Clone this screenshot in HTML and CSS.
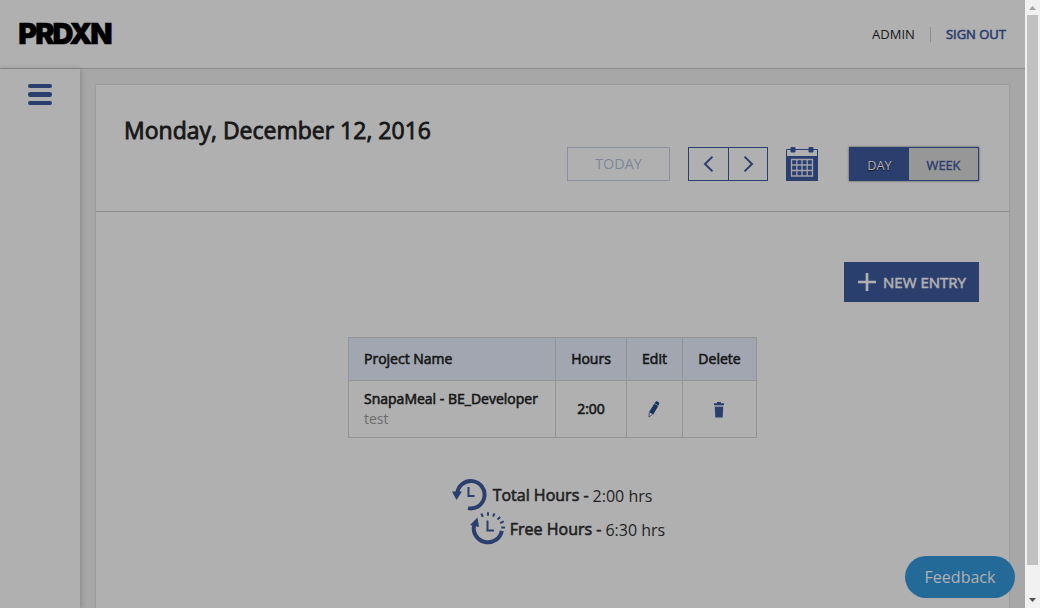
FILE: index.html
```html
<!DOCTYPE html>
<html lang="en">
<head>
<meta charset="utf-8">
<title>PRDXN Timesheet</title>
<link rel="stylesheet" href="styles.css">
</head>
<body>
<div class="window">
  <div class="page">
    <header class="topbar">
      <svg class="logo" width="96" height="24" viewBox="0 0 96 24"><text x="1.200" y="22.300" textLength="94.500" lengthAdjust="spacing">PRDXN</text></svg>
      <nav class="account">
        <span class="admin">ADMIN</span>
        <a class="signout strong">SIGN OUT</a>
      </nav>
    </header>
    <div class="body">
      <aside class="sidebar"><div class="burger"><i></i><i></i><i></i></div></aside>
      <main class="card">
        <div class="card-head">
          <h1 class="strong">Monday, December 12, 2016</h1>
          <div class="controls">
            <div class="today">TODAY</div>
            <div class="arrows">
              <span><svg width="10" height="16" viewBox="0 0 10 16"><path d="M9.500 .6L2 8l7.500 7.400"/></svg></span>
              <span><svg width="10" height="16" viewBox="0 0 10 16"><path d="M1.500 .6L9 8l-7.500 7.400"/></svg></span>
            </div>
            <svg class="calendar" width="32" height="34" viewBox="0 0 32 34">
              <path class="line" d="M.5 10V2.500h31V10"/>
              <rect class="fill" y="9" width="32" height="25"/>
              <rect class="fill" x="4.500" width="5" height="5.500" rx="1"/>
              <rect class="fill" x="22.500" width="5" height="5.500" rx="1"/>
              <path class="grid" d="M5.500 12.500h21v16.500h-21zM10.800 12.500v16.500M16 12.500v16.500M21.200 12.500v16.500M5.500 18h21M5.500 23.500h21"/>
            </svg>
            <div class="switch"><span class="day">DAY</span><span class="week strong">WEEK</span></div>
          </div>
        </div>
        <div class="new-entry strong">
          <svg width="18" height="18" viewBox="0 0 18 18"><path d="M9 0v18M0 9h18"/></svg>
          <span>NEW ENTRY</span>
        </div>
        <table class="entries">
          <tr class="strong"><th class="name">Project Name</th><th class="hours">Hours</th><th class="edit">Edit</th><th class="delete">Delete</th></tr>
          <tr>
            <td class="name"><div class="strong">SnapaMeal - BE_Developer</div><div class="note">test</div></td>
            <td class="strong">2:00</td>
            <td><svg class="pencil" width="12" height="17" viewBox="0 0 12 17"><path d="M7.200 1.200Q8.200 0 9.600.4q2 .8 1.600 2.600l-.7 1.400-4-2.200zM6.200 2.800L10.200 5 5.300 13.600 1 11.200z"/><path class="tip" d="M1.200 11.500L.9 16l3.700-2.600"/></svg></td>
            <td><svg class="bin" width="10" height="16" viewBox="0 0 10 16"><path class="fill" d="M0 1.200h3V0h4v1.200h3v1.800H0zM.8 5h8.400l-.5 10.500H1.300z"/><path class="rim" d="M.5 3h9v2h-9z"/></svg></td>
          </tr>
        </table>
        <div class="totals">
          <div class="total">
            <svg width="36" height="34" viewBox="0 0 36 34"><path class="ring" d="M4.200 15.500A13.700 13.700 0 1 1 15 30.100"/><path class="fill" d="M-1 13.500h10L3.500 22z"/><path class="hands" d="M15.500 9v9h6"/></svg>
            <span class="label strong">Total Hours -</span><span class="value">2:00 hrs</span>
          </div>
          <div class="total">
            <svg width="36" height="34" viewBox="0 0 36 34"><path class="ring" d="M4 13.500A13.900 13.900 0 1 0 31.800 18.800"/><path class="fill" d="M0 13l7.500-7.500 1.500 9.500z"/><path class="hands" d="M17.500 8.500v10H24"/><path class="ticks" d="M12.800 4.800L11.300 1.500M18 3.800V.2M23 4.700l1.500-3.200M27.500 7.500l2.700-2.500M30.200 11.200l3.500-1.800M31.200 15.400h3.800"/></svg>
            <span class="label strong">Free Hours -</span><span class="value">6:30 hrs</span>
          </div>
        </div>
      </main>
    </div>
    <div class="feedback">Feedback</div>
  </div>
  <div class="scrollbar">
    <svg width="7" height="4" viewBox="0 0 7 4"><path fill="#a3a3a3" d="M0 4h7L3.500 0z"/></svg>
    <div class="thumb"></div>
    <svg width="7" height="4" viewBox="0 0 7 4"><path fill="#505050" d="M0 0h7L3.500 4z"/></svg>
  </div>
</div>
</body>
</html>
```

FILE: styles.css
```css
* { box-sizing: border-box; }
body { margin: 0; font-family: "Open Sans", "Noto Sans", sans-serif; color: #171717; }
.window { display: flex; width: 1040px; height: 608px; overflow: hidden; }
.page { position: relative; display: flex; flex-direction: column; width: 1025px; height: 608px; background: #a7a7a7; overflow: hidden; }
.strong { font-weight: 400; -webkit-text-stroke: .6px currentColor; }
.fill { fill: #2b3f6f; }
svg { overflow: visible; }

.topbar { display: flex; flex: none; justify-content: space-between; align-items: center; height: 69px; padding: 0 19px 0 17px; background: #b0b0b0; border-bottom: 1px solid #8c8c8c; }
.logo text { font: 900 29px Inter, sans-serif; fill: #000; stroke: #000; stroke-width: .5; }
.account { display: flex; align-items: center; font-size: 13px; line-height: 15px; }
.admin { padding-right: 15px; border-right: 1px solid #8c8c8c; }
.signout { padding-left: 15px; color: #2b3f6f; }

.body { display: flex; flex: 1; min-height: 0; }
.sidebar { width: 80px; padding: 15px 28px; background: #b0b0b0; box-shadow: 1px 0 5px rgba(0,0,0,.2); }
.burger { display: flex; flex-direction: column; gap: 4px; }
.burger i { height: 4.400px; border-radius: 2.200px; background: #2b3f6f; }
.card { width: 913px; height: 620px; margin: 16px 0 0 16px; background: #b0b0b0; box-shadow: 0 0 2px rgba(0,0,0,.2); display: flex; flex-direction: column; }
.card-head { display: flex; flex: none; justify-content: space-between; height: 127px; padding: 0 30px 0 28px; border-bottom: 1px solid #8c8c8c; }
h1 { margin: 30px 0 0; font-size: 23px; line-height: 31px; white-space: nowrap; }
h1.strong { -webkit-text-stroke-width: .85px; }
.controls { display: flex; align-items: flex-start; padding-top: 62px; }
.today { width: 103px; height: 34px; border: 1px solid #8a90a2; color: #7e869b; font-size: 14.400px; line-height: 32px; text-align: center; }
.arrows { display: flex; width: 80px; height: 34px; margin-left: 18px; border: 1px solid #2b3f6f; }
.arrows span { display: flex; flex: 1; align-items: center; justify-content: center; }
.arrows span + span { border-left: 1px solid #2b3f6f; }
.arrows path { fill: none; stroke: #2b3f6f; stroke-width: 2; }
.calendar { margin-left: 18px; }
.line { fill: none; stroke: #2b3f6f; }
.grid { fill: none; stroke: #a0a3ac; stroke-width: 1.300; }
.switch { display: flex; width: 130px; height: 34px; margin-left: 31px; border: 1px solid #2b3f6f; box-shadow: 0 0 2px rgba(0,0,0,.6); font-size: 12.800px; line-height: 34px; text-align: center; }
.day { width: 59px; background: #2b3f6f; color: #b0b0b0; text-shadow: 0 1px 1px #111; }
.week { flex: 1; background: #979797; color: #2b3f6f; }
.week.strong { -webkit-text-stroke-width: .4px; }

.new-entry { display: flex; align-items: center; align-self: flex-end; flex: none; width: 135px; height: 40px; margin: 50px 30px 0 0; padding-left: 14px; gap: 7px; background: #2b3f6f; color: #b0b0b0; font-size: 15px; white-space: nowrap; }
.new-entry path { stroke: #b0b0b0; stroke-width: 2.700; }
.entries { width: 409px; margin: 35px 0 0 252px; border-collapse: collapse; table-layout: fixed; font-size: 14px; line-height: 20px; text-align: center; }
.entries th, .entries td { padding: 0; border: 1px solid #949494; font-weight: 400; }
.entries th { height: 43px; background: #a1a6b0; }
.entries td { height: 57px; }
.entries .name { width: 207px; padding-left: 15px; text-align: left; }
.hours { width: 71px; }
.edit { width: 56px; }
.delete { width: 74px; }
.note { color: #6c6c6c; }
.entries svg { display: block; margin: 0 auto; transform: translateX(-1px); }
.entries .bin { transform: translate(-1px, 1px); }
.pencil path { fill: #17335f; }
.pencil .tip { fill: #b0b0b0; stroke: #17335f; stroke-width: .7; }
.rim { fill: #858b9b; }

.totals { display: flex; flex-direction: column; align-items: center; margin-top: 40px; }
.total { display: flex; align-items: center; height: 34px; font-size: 16px; white-space: nowrap; color: #1f1f1f; }
.total:last-child { margin-left: 30px; }
.label { margin-left: 4px; }
.value { margin: 2px 0 0 4px; }
.ring { fill: none; stroke: #2b3f6f; stroke-width: 4; }
.hands, .ticks { fill: none; stroke: #2b3f6f; stroke-width: 2; }

.feedback { position: absolute; left: 905px; top: 556px; width: 110px; height: 42px; border-radius: 21px; background: #246a99; color: #b0b0b0; font-size: 16px; line-height: 42px; text-align: center; }
.scrollbar { display: flex; flex-direction: column; align-items: center; width: 15px; padding-top: 6px; background: #f1f1f1; }
.thumb { width: 11px; height: 550px; margin: 5px 0 33px; background: #c1c1c1; flex: none; }
```
